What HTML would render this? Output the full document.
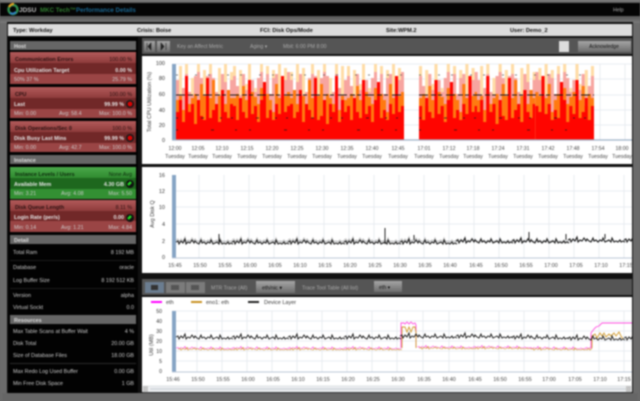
<!DOCTYPE html>
<html lang="en"><head><meta charset="utf-8"><title>Performance Details</title>
<style>
html,body{margin:0;padding:0;width:640px;height:401px;overflow:hidden;background:#6b6b6b}
svg{display:block;filter:blur(.8px);font-family:"Liberation Sans",sans-serif}
.s{font-size:5.4px;fill:#ccc}.h{font-size:5.4px;fill:#e4e4e4;font-weight:bold}.k{font-size:5.4px;fill:#222}.b{font-size:5.6px;fill:#111;font-weight:bold}.w{font-size:5.4px;fill:#ddd;font-weight:bold}.g{font-size:5.2px;fill:#aaa}.e{text-anchor:end}.m{text-anchor:middle}
</style></head><body>
<svg xmlns="http://www.w3.org/2000/svg" width="640" height="401" viewBox="0 0 640 401">
<defs>
<linearGradient id="gt" x1="0" y1="0" x2="0" y2="1"><stop offset="0" stop-color="#8a8a8a"/><stop offset="1" stop-color="#555"/></linearGradient>
<linearGradient id="gb" x1="0" y1="0" x2="0" y2="1"><stop offset="0" stop-color="#555"/><stop offset="1" stop-color="#7a7a7a"/></linearGradient>
<linearGradient id="bt" x1="0" y1="0" x2="0" y2="1"><stop offset="0" stop-color="#a5a5a5"/><stop offset="1" stop-color="#6c6c6c"/></linearGradient>
<linearGradient id="rt" x1="0" y1="0" x2="0" y2="1"><stop offset="0" stop-color="#b25a5a"/><stop offset="1" stop-color="#8e3b3b"/></linearGradient>
<linearGradient id="gr" x1="0" y1="0" x2="0" y2="1"><stop offset="0" stop-color="#4aa84a"/><stop offset="1" stop-color="#2f8a2f"/></linearGradient>
<g id="A">
<path fill="#ffdca6" d="M0 140V95h3V66h3V95h3V64h3V95h3V78h3V95h3V64h3V95h3V70h3V95h3V64h3V95h3V95h3V68h3V95h3V64h3V95h3V72h3V140Z"/>
<path fill="#f7a5a0" d="M0 140V80h3V95h3V88h3V74h3V92h3V95h3V76h3V72h3V78h3V95h3V76h3V74h3V78h3V92h3V95h3V74h3V82h3V90h3V80h3V140Z"/>
<path fill="#ff7a10" d="M0 140V100h3V96h3V110h3V92h3V104h3V98h3V94h3V108h3V84h3V96h3V112h3V98h3V80h3V106h3V96h3V92h3V104h3V90h3V98h3V140Z"/>
<path fill="#ff0500" d="M0 140V112h3V100h3V122h3V76h3V112h3V104h3V124h3V100h3V116h3V120h3V78h3V118h3V110h3V104h3V122h3V90h3V112h3V118h3V104h3V140Z"/>
</g>
<g id="B">
<path fill="#ffdca6" d="M0 140V66h3V95h3V70h3V95h3V84h3V64h3V95h3V88h3V95h3V64h3V95h3V66h3V95h3V70h3V95h3V64h3V95h3V68h3V95h3V140Z"/>
<path fill="#f7a5a0" d="M0 140V76h3V86h3V95h3V74h3V90h3V95h3V80h3V92h3V78h3V72h3V95h3V74h3V94h3V78h3V74h3V95h3V76h3V80h3V72h3V140Z"/>
<path fill="#ff7a10" d="M0 140V98h3V94h3V106h3V86h3V100h3V110h3V92h3V97h3V104h3V88h3V108h3V94h3V100h3V112h3V84h3V98h3V106h3V96h3V92h3V140Z"/>
<path fill="#ff0500" d="M0 140V106h3V120h3V98h3V112h3V118h3V80h3V114h3V106h3V122h3V100h3V82h3V118h3V110h3V120h3V104h3V114h3V76h3V112h3V106h3V140Z"/>
</g>
<path id="n" fill="none" d="M0 0l2-1 1 3 2-3 2 2 2-4 1 5 2-2 2 1 2-3 2 3 1-2 2 2 2 1 2-4 1 3 2-1 2 2 2-2 2 1 1-3 2 4 2-1 2-1 2 2 1-4 2 4 2-1 2 1 2-2 1 2 2-1 2 1"/>
<clipPath id="c2"><rect x="176" y="170" width="456" height="90"/></clipPath>
<clipPath id="c3a"><rect x="176" y="305" width="226" height="66"/></clipPath>
<clipPath id="c3b"><rect x="417" y="305" width="175" height="66"/></clipPath>
<clipPath id="c3k"><rect x="176" y="305" width="456" height="66"/></clipPath>
</defs>

<rect width="640" height="401" fill="#6b6b6b"/>
<rect width="640" height="3" fill="url(#gt)"/>
<rect y="3" width="640" height="13" fill="#050505"/>
<rect y="16" width="640" height="7" fill="url(#gb)"/>
<rect x="2" y="393" width="636" height="8" fill="#666"/>

<!-- Logo and title -->
<circle cx="13" cy="9.500" r="4.500" fill="none" stroke="#2f8f4f" stroke-width="2.400"/>
<path d="M9 7a5 5 0 0 1 5-3" stroke="#e0a020" stroke-width="2.200" fill="none"/>
<path d="M10 13a5 5 0 0 0 6-1" stroke="#2f7fc0" stroke-width="2.200" fill="none"/>
<text x="19" y="12" style="font-size:6.500px;font-weight:bold;fill:#bbb">JDSU</text>
<text x="40" y="12" style="font-size:6.200px;fill:#2f7a2f;font-weight:bold">MKC Tech™</text>
<text x="76" y="12" style="font-size:6.200px;fill:#1a6690;font-weight:bold">Performance Details</text>
<text x="613" y="11.500" style="font-size:5.200px;fill:#aaa">Help</text>

<!-- Main frame -->
<rect x="7" y="22" width="626" height="371" fill="#111"/>
<rect x="8" y="24" width="624" height="12" fill="#dcdcdc"/>
<text x="13" y="32" class="b">Type: Workday</text>
<text x="137" y="32" class="b">Crisis: Boise</text>
<text x="260" y="32" class="b">FCI: Disk Ops/Mode</text>
<text x="386" y="32" class="b">Site:WPM.2</text>
<text x="510" y="32" class="b">User: Demo_2</text>

<!-- Left column -->
<rect x="8" y="37" width="130" height="356" fill="#020202"/>
<rect x="10" y="41" width="126" height="9" fill="#666"/><text x="14" y="48" class="w">Host</text>

<rect x="10" y="52" width="126" height="32" fill="#9a4545"/>
<rect x="10" y="52" width="126" height="11" fill="url(#rt)"/>
<rect x="10" y="63" width="126" height="11" fill="#712828"/>
<text x="15" y="61" class="h" style="fill:#2a1010">Communication Errors</text><text x="132" y="61" class="e" style="font-size:5.400px;fill:#2a1010">100.00 %</text>
<text x="14" y="72" class="h">Cpu Utilization Target</text><text x="132" y="72" class="h e">0.00 %</text>
<text x="14" y="81" class="s">50% 37 %</text><text x="132" y="81" class="s e">25.79 %</text>

<rect x="10" y="87" width="126" height="31" fill="#9a4545"/>
<rect x="10" y="87" width="126" height="11" fill="url(#rt)"/>
<rect x="10" y="98" width="126" height="11" fill="#712828"/>
<text x="15" y="96" class="h" style="fill:#2a1010">CPU</text><text x="132" y="96" class="e" style="font-size:5.400px;fill:#2a1010">100.00 %</text>
<text x="14" y="106" class="h">Last</text><text x="124" y="106" class="h e">99.99 %</text>
<circle cx="130" cy="104" r="4" fill="#1a1a1a"/><circle cx="130" cy="104" r="2.400" fill="#d00"/>
<text x="14" y="115" class="s">Min: 0.00</text><text x="59" y="115" class="s">Avg: 58.4</text><text x="132" y="115" class="s e">Max: 100.0 %</text>

<rect x="10" y="121" width="126" height="31" fill="#9a4545"/>
<rect x="10" y="121" width="126" height="11" fill="url(#rt)"/>
<rect x="10" y="132" width="126" height="11" fill="#712828"/>
<text x="15" y="130" class="h" style="fill:#2a1010">Disk Operations/Sec 0</text><text x="132" y="130" class="e" style="font-size:5.400px;fill:#2a1010">100.0 %</text>
<text x="14" y="140" class="h">Disk Busy Last Mins</text><text x="124" y="140" class="h e">99.99 %</text>
<circle cx="130" cy="138" r="4" fill="#1a1a1a"/><circle cx="130" cy="138" r="2.400" fill="#d00"/>
<text x="14" y="149" class="s">Min: 0.00</text><text x="59" y="149" class="s">Avg: 42.7</text><text x="132" y="149" class="s e">Max: 100.0 %</text>

<rect x="10" y="155" width="126" height="9" fill="#666"/><text x="14" y="162" class="w">Instance</text>

<rect x="10" y="167" width="126" height="32" fill="#339033"/>
<rect x="10" y="167" width="126" height="11" fill="url(#gr)"/>
<rect x="10" y="178" width="126" height="11" fill="#1e671e"/>
<text x="15" y="176" class="h" style="fill:#0c2a0c">Instance Levels / Users</text><text x="132" y="176" class="e" style="font-size:5.400px;fill:#0c2a0c">None Avg</text>
<text x="14" y="186" class="h">Available Mem</text><text x="124" y="186" class="h e">4.30 GB</text>
<circle cx="130" cy="184" r="4" fill="#111"/><path d="M128 185l3-3" stroke="#2d2" stroke-width="2.400"/>
<text x="14" y="195" class="s">Min: 3.21</text><text x="61" y="195" class="s">Avg: 4.08</text><text x="132" y="195" class="s e">Max: 5.50</text>

<rect x="10" y="200" width="126" height="32" fill="#9a4545"/>
<rect x="10" y="200" width="126" height="11" fill="url(#rt)"/>
<rect x="10" y="211" width="126" height="10" fill="#712828"/>
<text x="15" y="209" class="h" style="fill:#2a1010">Disk Queue Length</text><text x="132" y="209" class="e" style="font-size:5.400px;fill:#2a1010">8.11 %</text>
<text x="14" y="219" class="h">Login Rate (per/s)</text><text x="124" y="219" class="h e">0.00</text>
<circle cx="130" cy="218" r="4" fill="#111"/><path d="M128 219l3-3" stroke="#2d2" stroke-width="2.400"/>
<text x="14" y="229" class="s">Min: 0.14</text><text x="61" y="229" class="s">Avg: 1.21</text><text x="132" y="229" class="s e">Max: 4.84</text>

<rect x="10" y="235" width="126" height="9" fill="#666"/><text x="14" y="242" class="w">Detail</text>
<text x="13" y="254" class="s">Total Ram</text><text x="134" y="254" class="s e">8 192 MB</text>
<rect x="10" y="260" width="126" height="1" fill="#1a1a1a"/>
<text x="13" y="269" class="s">Database</text><text x="134" y="269" class="s e">oracle</text>
<text x="13" y="282" class="s">Log Buffer Size</text><text x="134" y="282" class="s e">8 192 512 KB</text>
<rect x="10" y="288" width="126" height="1" fill="#1a1a1a"/>
<text x="13" y="297" class="s">Version</text><text x="134" y="297" class="s e">alpha</text>
<text x="13" y="309" class="s">Virtual Sockt</text><text x="134" y="309" class="s e">0.0</text>
<rect x="10" y="315" width="126" height="9" fill="#666"/><text x="14" y="322" class="w">Resources</text>
<text x="13" y="333" class="s">Max Table Scans at Buffer Wait</text><text x="134" y="333" class="s e">4 %</text>
<text x="13" y="345" class="s">Disk Total</text><text x="134" y="345" class="s e">20.00 GB</text>
<text x="13" y="357" class="s">Size of Database Files</text><text x="134" y="357" class="s e">18.00 GB</text>
<rect x="10" y="363" width="126" height="1" fill="#2a2a2a"/>
<text x="13" y="373" class="s">Max Redo Log Used Buffer</text><text x="134" y="373" class="s e">0.00 GB</text>
<text x="13" y="385" class="s">Min Free Disk Space</text><text x="134" y="385" class="s e">1 GB</text>

<!-- Toolbar 1 -->
<rect x="142" y="38" width="490" height="16" fill="#555"/>
<rect x="144" y="41" width="11" height="11" fill="url(#bt)"/><rect x="157" y="41" width="13" height="11" fill="url(#bt)"/>
<path d="M151 43l-3 3.500 3 3.500ZM147 43v7" fill="#222" stroke="#222" stroke-width=".6"/>
<path d="M161 43l3 3.500-3 3.500ZM166 43v7" fill="#222" stroke="#222" stroke-width=".6"/>
<text x="177" y="48" class="g">Key an Affect Metric</text>
<text x="250" y="48" class="g">Aging ▾</text><text x="283" y="48" class="g">Mbit: 6:00 PM 8:00</text>
<rect x="559" y="41" width="10" height="11" fill="#ddd"/>
<rect x="578" y="41" width="53" height="11" fill="url(#bt)"/>
<text x="604" y="48" class="m" style="font-size:5px;fill:#111">Acknowledge</text>

<!-- Chart 1 -->
<rect x="142" y="56" width="490" height="108" fill="#fff"/>
<g stroke="#e4e8ee" stroke-width=".8">
<path d="M172 64H632M172 79H632M172 95H632M172 110H632M172 125H632"/>
<path d="M600 64V140M625 64V140"/>
</g>
<use href="#A" x="176"/><use href="#B" x="233"/><use href="#A" transform="translate(347 0) scale(-1 1)"/><use href="#B" x="347"/>
<use href="#B" transform="translate(419 0) scale(1.03 1)"/><use href="#A" transform="translate(477 0) scale(1.03 1)"/><use href="#B" transform="translate(594 0) scale(-1.03 1)"/>
<rect x="172" y="64" width="4" height="76" fill="#86a4c4"/>
<path d="M172 140H632" stroke="#9fb2c8" stroke-width="1.200"/>
<g fill="none" stroke="#1a1a1a">
<path d="M176 95H403M419 95H594" stroke-width="1" stroke-dasharray="9 3 5 2 4 4"/>
<path d="M176 118H403M419 118H594" stroke-width=".8" stroke-dasharray="2 23 3 16 2 9"/>
<path d="M176 130H403M419 130H594" stroke-width=".8" stroke-dasharray="2 33 3 21 2 12"/>
<path d="M176 75H403M419 75H594" stroke-width=".8" stroke="#555" stroke-dasharray="2 17 2 11"/>
</g>
<g style="font-size:5.500px;fill:#333">
<text x="165" y="65" class="e">100</text><text x="165" y="80" class="e">80</text><text x="165" y="96" class="e">60</text><text x="165" y="112" class="e">40</text><text x="165" y="127" class="e">20</text><text x="165" y="142" class="e">0</text>
</g>
<text transform="translate(151 102) rotate(-90)" class="m" style="font-size:5.500px;fill:#333">Total CPU Utilization (%)</text>
<g class="m" style="font-size:5.200px;fill:#444">
<text x="175" y="150">12:00</text><text x="175" y="158">Tuesday</text>
<text x="198" y="150">12:05</text><text x="198" y="158">Tuesday</text>
<text x="222" y="150">12:10</text><text x="222" y="158">Tuesday</text>
<text x="247" y="150">12:15</text><text x="247" y="158">Tuesday</text>
<text x="272" y="150">12:20</text><text x="272" y="158">Tuesday</text>
<text x="297" y="150">12:25</text><text x="297" y="158">Tuesday</text>
<text x="322" y="150">12:30</text><text x="322" y="158">Tuesday</text>
<text x="347" y="150">12:35</text><text x="347" y="158">Tuesday</text>
<text x="372" y="150">12:40</text><text x="372" y="158">Tuesday</text>
<text x="398" y="150">12:45</text><text x="398" y="158">Tuesday</text>
<text x="424" y="150">17:01</text><text x="424" y="158">Tuesday</text>
<text x="449" y="150">17:12</text><text x="449" y="158">Tuesday</text>
<text x="473" y="150">17:18</text><text x="473" y="158">Tuesday</text>
<text x="498" y="150">17:24</text><text x="498" y="158">Tuesday</text>
<text x="523" y="150">17:31</text><text x="523" y="158">Tuesday</text>
<text x="548" y="150">17:42</text><text x="548" y="158">Tuesday</text>
<text x="573" y="150">17:48</text><text x="573" y="158">Tuesday</text>
<text x="598" y="150">17:54</text><text x="598" y="158">Tuesday</text>
<text x="622" y="150">18:00</text><text x="622" y="158">Tuesday</text>
</g>

<!-- Chart 2 -->
<rect x="142" y="167" width="490" height="106" fill="#fff"/>
<g stroke="#e4e8ee" stroke-width=".8">
<path d="M172 191H632M172 207H632M172 224H632M172 241H632"/>
<path d="M199 175V258M224 175V258M249 175V258M274 175V258M299 175V258M324 175V258M349 175V258M374 175V258M399 175V258M424 175V258M449 175V258M474 175V258M499 175V258M524 175V258M549 175V258M574 175V258M599 175V258M624 175V258"/>
</g>
<rect x="172" y="175" width="4" height="83" fill="#86a4c4"/>
<path d="M172 258H632" stroke="#bcc8d8" stroke-width="1"/>
<g clip-path="url(#c2)">
<g stroke="#999" stroke-width="1" opacity=".6">
<use href="#n" transform="translate(176 240)"/><use href="#n" transform="translate(232 240)"/><use href="#n" transform="translate(288 240)"/><use href="#n" transform="translate(344 240)"/><use href="#n" transform="translate(400 240)"/><use href="#n" transform="translate(456 240)"/><use href="#n" transform="translate(512 240)"/><use href="#n" transform="translate(568 240)"/><use href="#n" transform="translate(624 240)"/>
</g>
<g stroke="#111" stroke-width="1">
<use href="#n" transform="translate(176 242)"/><use href="#n" transform="translate(232 242)"/><use href="#n" transform="translate(288 242)"/><use href="#n" transform="translate(344 242)"/><use href="#n" transform="translate(400 242)"/><use href="#n" transform="translate(456 241)"/><use href="#n" transform="translate(512 241)"/><use href="#n" transform="translate(568 240)"/><use href="#n" transform="translate(624 240)"/>
</g>
<path d="M219 242V234M385 244V228M414 240V235M529 240V232M566 240V234M605 239V234" stroke="#222" stroke-width="1" fill="none"/>
</g>
<g style="font-size:5.500px;fill:#333">
<text x="165" y="177" class="e">16</text><text x="165" y="193" class="e">12</text><text x="165" y="209" class="e">10</text><text x="165" y="226" class="e">4</text><text x="165" y="243" class="e">2</text><text x="165" y="259" class="e">0</text>
</g>
<text transform="translate(154 214) rotate(-90)" class="m" style="font-size:5.500px;fill:#333">Avg Disk Q</text>
<g class="m" style="font-size:5.400px;fill:#444">
<text x="175" y="267">15:45</text><text x="200" y="267">15:50</text><text x="225" y="267">15:55</text><text x="250" y="267">16:00</text><text x="275" y="267">16:05</text><text x="300" y="267">16:10</text><text x="325" y="267">16:15</text><text x="350" y="267">16:20</text><text x="375" y="267">16:25</text><text x="400" y="267">16:30</text><text x="425" y="267">16:35</text><text x="450" y="267">16:40</text><text x="476" y="267">16:45</text><text x="501" y="267">16:50</text><text x="526" y="267">16:55</text><text x="551" y="267">17:00</text><text x="576" y="267">17:05</text><text x="601" y="267">17:10</text><text x="626" y="267">17:15</text>
</g>

<!-- Toolbar 2 -->
<rect x="142" y="279" width="490" height="16" fill="#555"/>
<rect x="145" y="282" width="19" height="11" fill="#6b7d90"/><rect x="166" y="282" width="19" height="11" fill="#7b7b7b"/><rect x="186" y="282" width="19" height="11" fill="#7b7b7b"/>
<rect x="151" y="285" width="7" height="5" fill="#333"/><rect x="171" y="285" width="8" height="5" fill="#555"/><rect x="191" y="285" width="8" height="5" fill="#555"/>
<text x="211" y="289.500" class="g">MTR Trace (All)</text>
<rect x="256" y="281" width="39" height="12" fill="url(#bt)"/><text x="262" y="289.500" style="font-size:5.400px;fill:#111">eth/nic ▾</text>
<text x="302" y="289.500" class="g">Trace Tool Table (All list)</text>
<rect x="374" y="281" width="28" height="11" fill="url(#bt)"/><text x="379" y="289" style="font-size:5.200px;fill:#111">eth ▾</text>

<!-- Chart 3 -->
<rect x="142" y="297" width="490" height="95" fill="#fff"/>
<rect x="151" y="301" width="11" height="2" fill="#f0f"/><text x="166" y="304" style="font-size:5.500px;fill:#333">eth</text>
<rect x="191" y="301" width="11" height="2" fill="#c89020"/><text x="206" y="304" style="font-size:5.500px;fill:#333">eno1: eth</text>
<rect x="248" y="301" width="11" height="2" fill="#222"/><text x="264" y="304" style="font-size:5.500px;fill:#333">Device Layer</text>
<g stroke="#e4e8ee" stroke-width=".8">
<path d="M172 311H632M172 321H632M172 331H632M172 341H632M172 351H632M172 361H632"/>
<path d="M197 311V372M222 311V372M247 311V372M272 311V372M297 311V372M322 311V372M347 311V372M372 311V372M397 311V372M423 311V372M449 311V372M474 311V372M499 311V372M524 311V372M549 311V372M574 311V372M599 311V372M624 311V372"/>
</g>
<rect x="172" y="311" width="4" height="61" fill="#86a4c4"/>
<path d="M172 372H632" stroke="#bcc8d8" stroke-width="1"/>
<g stroke="#ff50e0" stroke-width=".9">
<g clip-path="url(#c3a)"><use href="#n" transform="translate(176 348) scale(1 .5)"/><use href="#n" transform="translate(232 348) scale(1 .5)"/><use href="#n" transform="translate(288 348) scale(1 .5)"/><use href="#n" transform="translate(344 348) scale(1 .5)"/></g>
<g clip-path="url(#c3b)"><use href="#n" transform="translate(417 347) scale(1 .5)"/><use href="#n" transform="translate(473 347) scale(1 .5)"/><use href="#n" transform="translate(529 348) scale(1 .5)"/><use href="#n" transform="translate(585 348) scale(1 .5)"/></g>
<path d="M401 348V323h3l1 1 2-2 2 2 2-2 2 2 2-1 1 2V347M591 348V333l3-4 2-2 3-1 3-3h30" fill="none"/>
</g>
<g stroke="#d09a2c" stroke-width=".9">
<g clip-path="url(#c3a)"><use href="#n" transform="translate(178 349) scale(1 .5)"/><use href="#n" transform="translate(234 349) scale(1 .5)"/><use href="#n" transform="translate(290 349) scale(1 .5)"/><use href="#n" transform="translate(346 349) scale(1 .5)"/></g>
<g clip-path="url(#c3b)"><use href="#n" transform="translate(419 348) scale(1 .5)"/><use href="#n" transform="translate(475 348) scale(1 .5)"/><use href="#n" transform="translate(531 349) scale(1 .5)"/><use href="#n" transform="translate(587 349) scale(1 .5)"/></g>
<path d="M402 348V327h3l2 5 2-5 2 5 2-5 2 0 1 5V348M592 348V336l3-2 2 4 3-5 2 3 2-3 2 4 3-3 2 2 3-3 2 3 3-4 2 4 2 3" fill="none"/>
</g>
<g stroke="#111" stroke-width=".9" clip-path="url(#c3k)">
<use href="#n" transform="translate(176 337)"/><use href="#n" transform="translate(232 337)"/><use href="#n" transform="translate(288 337)"/><use href="#n" transform="translate(344 337)"/><use href="#n" transform="translate(400 336)"/><use href="#n" transform="translate(456 336)"/><use href="#n" transform="translate(512 337)"/><use href="#n" transform="translate(568 338)"/><use href="#n" transform="translate(624 338)"/>
</g>
<g style="font-size:5.200px;fill:#333">
<text x="162" y="313" class="e">50</text><text x="162" y="323" class="e">40</text><text x="162" y="333" class="e">30</text><text x="162" y="343" class="e">20</text><text x="162" y="353" class="e">10</text><text x="162" y="363" class="e">5</text><text x="162" y="373" class="e">0</text>
</g>
<text transform="translate(153 345) rotate(-90)" class="m" style="font-size:5.500px;fill:#333">Util (MB)</text>
<g class="m" style="font-size:5.400px;fill:#444">
<text x="173" y="381">15:46</text><text x="198" y="381">15:50</text><text x="223" y="381">15:55</text><text x="248" y="381">16:00</text><text x="273" y="381">16:05</text><text x="298" y="381">16:10</text><text x="323" y="381">16:15</text><text x="348" y="381">16:20</text><text x="373" y="381">16:25</text><text x="398" y="381">16:30</text><text x="424" y="381">16:35</text><text x="449" y="381">16:40</text><text x="475" y="381">16:45</text><text x="500" y="381">16:50</text><text x="525" y="381">16:55</text><text x="549" y="381">17:00</text><text x="575" y="381">17:05</text><text x="600" y="381">17:10</text><text x="624" y="381">17:15</text>
</g>
<rect x="143" y="386" width="488" height="6" fill="#eef0f2" stroke="#c8ccd0" stroke-width=".5"/>
<rect x="143" y="386" width="5" height="6" fill="#c4c4c4"/><rect x="626" y="386" width="5" height="6" fill="#c4c4c4"/>
<rect x="150" y="388" width="476" height="2" fill="#d6dade"/>
</svg>
</body></html>
